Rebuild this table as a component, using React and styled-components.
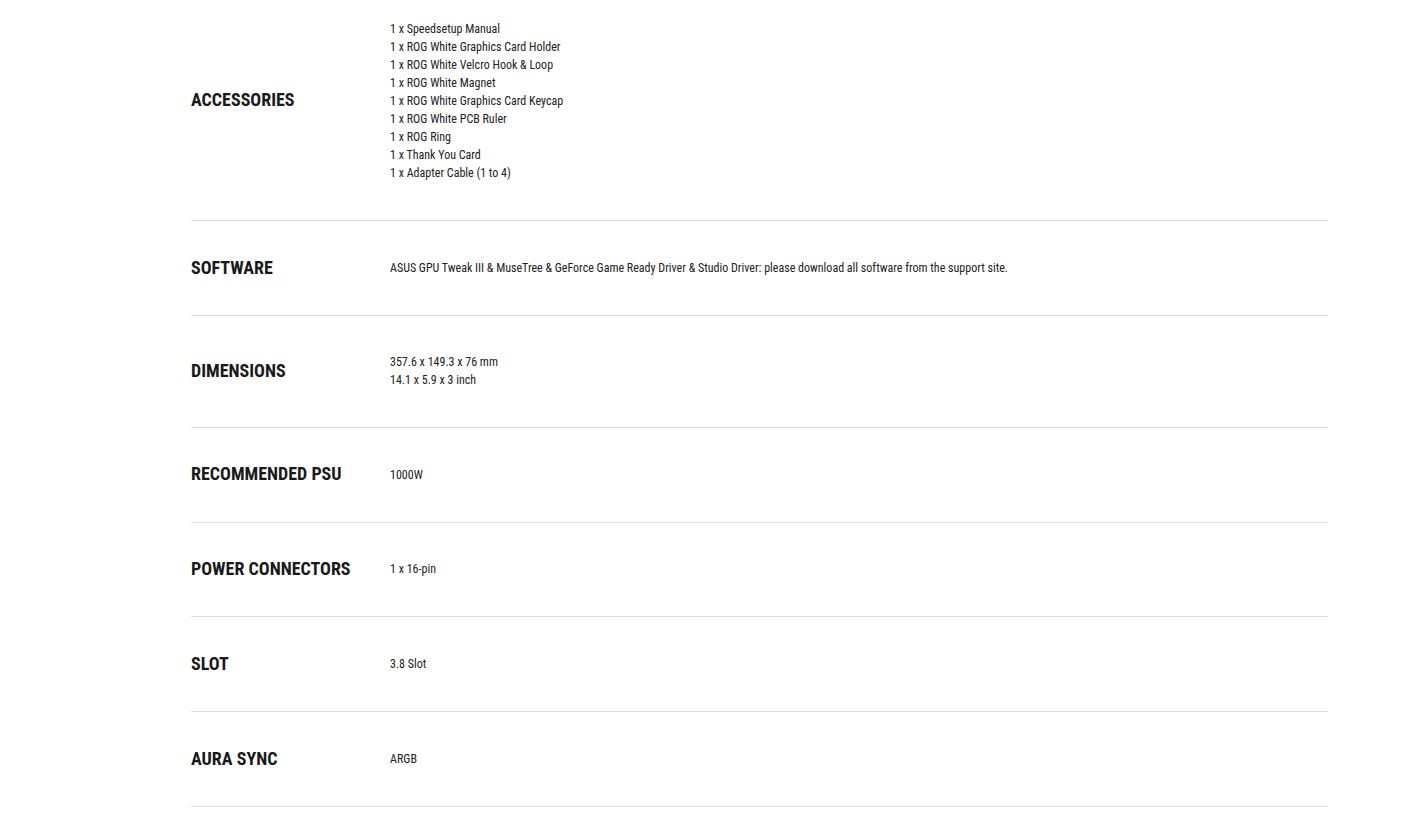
import React from "react";
import styled, { createGlobalStyle } from "styled-components";

const GlobalStyle = createGlobalStyle`
  html, body { margin: 0; padding: 0; background: #ffffff; }
  body {
    font-family: "Roboto Condensed", Roboto, "Liberation Sans", sans-serif;
    font-stretch: 75%;
    -webkit-font-smoothing: antialiased;
  }
`;

const Page = styled.main`
  padding: 0 92px 0 191px;
`;

const SpecList = styled.section`
  width: 1137px;
`;

const SpecRow = styled.div`
  display: grid;
  grid-template-columns: 199px 1fr;
  align-items: center;
  padding: ${(p) => (p.$clipped ? "19.5px 0 38.5px" : "37.5px 0")};
  border-bottom: 1px solid #dcdcdc;
`;

const SpecTitle = styled.h3`
  margin: 0;
  font-family: "Roboto Condensed", Roboto, "Liberation Sans", sans-serif;
  font-stretch: 75%;
  font-weight: 700;
  font-size: 18px;
  line-height: 18.8px;
  color: #1a1a1a;
  text-transform: uppercase;
  letter-spacing: 0;
`;

const SpecValue = styled.div`
  font-family: "Roboto Condensed", Roboto, "Liberation Sans", sans-serif;
  font-stretch: 75%;
  font-weight: 400;
  font-size: 12px;
  line-height: 18px;
  color: #222222;
`;

const Line = styled.div``;

const specs = [
  {
    title: "Accessories",
    lines: [
      "1 x Speedsetup Manual",
      "1 x ROG White Graphics Card Holder",
      "1 x ROG White Velcro Hook & Loop",
      "1 x ROG White Magnet",
      "1 x ROG White Graphics Card Keycap",
      "1 x ROG White PCB Ruler",
      "1 x ROG Ring",
      "1 x Thank You Card",
      "1 x Adapter Cable (1 to 4)",
    ],
    clipped: true,
  },
  {
    title: "Software",
    lines: [
      "ASUS GPU Tweak III & MuseTree & GeForce Game Ready Driver & Studio Driver: please download all software from the support site.",
    ],
  },
  { title: "Dimensions", lines: ["357.6 x 149.3 x 76 mm", "14.1 x 5.9 x 3 inch"] },
  { title: "Recommended PSU", lines: ["1000W"] },
  { title: "Power Connectors", lines: ["1 x 16-pin"] },
  { title: "Slot", lines: ["3.8 Slot"] },
  { title: "AURA SYNC", lines: ["ARGB"] },
];

export default function App() {
  return (
    <Page>
      <GlobalStyle />
      <SpecList>
        {specs.map((s) => (
          <SpecRow key={s.title} $clipped={s.clipped}>
            <SpecTitle>{s.title}</SpecTitle>
            <SpecValue>
              {s.lines.map((l) => (
                <Line key={l}>{l}</Line>
              ))}
            </SpecValue>
          </SpecRow>
        ))}
      </SpecList>
    </Page>
  );
}
